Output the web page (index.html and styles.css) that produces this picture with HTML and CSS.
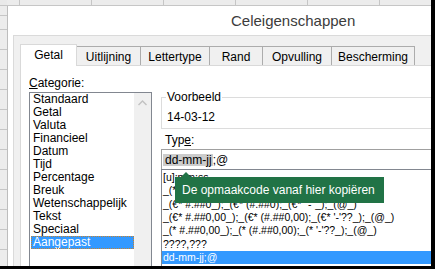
FILE: index.html
```html
<!DOCTYPE html>
<html>
<head>
<meta charset="utf-8">
<link rel="stylesheet" href="styles.css">
</head>
<body>
<div class="screen">
  <div class="corner"></div>
  <div class="col-headers"></div>
  <div class="row-headers"></div>
  <div class="dialog">
    <div class="titlebar">Celeigenschappen</div>
    <div class="body">
      <div class="tabs">
        <div class="tab active">Getal</div>
        <div class="tab">Uitlijning</div>
        <div class="tab">Lettertype</div>
        <div class="tab">Rand</div>
        <div class="tab">Opvulling</div>
        <div class="tab">Bescherming</div>
      </div>
      <div class="panel">
        <div class="left-col">
          <div class="label"><u>C</u>ategorie:</div>
          <div class="listbox">
            <div class="items">
              <div class="item">Standaard</div>
              <div class="item">Getal</div>
              <div class="item">Valuta</div>
              <div class="item">Financieel</div>
              <div class="item">Datum</div>
              <div class="item">Tijd</div>
              <div class="item">Percentage</div>
              <div class="item">Breuk</div>
              <div class="item">Wetenschappelijk</div>
              <div class="item">Tekst</div>
              <div class="item">Speciaal</div>
              <div class="item sel">Aangepast</div>
            </div>
            <div class="scroll">
              <svg class="chev" width="9" height="6" viewBox="0 0 9 6"><path d="M0.5 5 L4.5 1 L8.5 5" fill="none" stroke="#c2c2c2" stroke-width="1.4"/></svg>
            </div>
          </div>
        </div>
        <div class="right-col">
          <fieldset class="preview">
            <legend>Voorbeeld</legend>
            <div class="preview-value">14-03-12</div>
          </fieldset>
          <div class="label type-label">Typ<u>e</u>:</div>
          <div class="input"><span class="selected-text">dd-mm-jj</span>;@</div>
          <div class="format-list">
            <div class="fitem">[u]:mm:ss</div>
            <div class="fitem">_(* #.##0_);_(* (#.##0);_(* "-"_);_(@_)</div>
            <div class="fitem">_(€* #.##0_);_(€* (#.##0);_(€* "-"_);_(@_)</div>
            <div class="fitem">_(€* #.##0,00_);_(€* (#.##0,00);_(€* '-'??_);_(@_)</div>
            <div class="fitem">_(* #.##0,00_);_(* (#.##0,00);_(* '-'??_);_(@_)</div>
            <div class="fitem">????,???</div>
            <div class="fitem sel">dd-mm-jj;@</div>
            <div class="fitem">[$-F800]dddd d MMMM jjjj</div>
          </div>
          <div class="tooltip">De opmaakcode vanaf hier kopiëren</div>
        </div>
      </div>
    </div>
  </div>
</div>
</body>
</html>
```
FILE: styles.css
```css
html, body {
  margin: 0;
  padding: 0;
}
body {
  width: 435px;
  height: 269px;
  overflow: hidden;
  font-family: "Liberation Sans", Arial, sans-serif;
  font-size: 12px;
  color: #000;
}
.screen {
  box-sizing: border-box;
  width: 435px;
  height: 269px;
  border-right: 4px solid #000;
  border-bottom: 3px solid #000;
  overflow: hidden;
  display: grid;
  grid-template-columns: 7px 1fr;
  grid-template-rows: 6px 1fr;
  background: #f3f3f3;
}
.corner {
  background: #e9e9e9;
  border-bottom: 1px solid #c6c6c6;
  box-sizing: border-box;
}
.col-headers {
  background-color: #ececec;
  background-image: repeating-linear-gradient(to right, #c6c6c6 0 1px, transparent 1px 72px);
  background-position: 12px 0;
  border-bottom: 1px solid #c6c6c6;
  box-sizing: border-box;
}
.row-headers {
  background-color: #ececec;
  background-image: repeating-linear-gradient(to bottom, #c6c6c6 0 1px, transparent 1px 20px);
  background-position: 0 23px;
}
.dialog {
  display: flex;
  flex-direction: column;
  background: #fff;
  border-left: 1px solid #bdbdbd;
  min-width: 0;
}
.titlebar {
  height: 29px;
  box-sizing: border-box;
  padding-left: 223px;
  padding-top: 6px;
  font-size: 15px;
  line-height: 18px;
  color: #3c3c3c;
  white-space: nowrap;
}
.body {
  flex: 1;
  margin-left: 5px;
  background: #f0f0f0;
  border-top: 1px solid #dadada;
  border-left: 1px solid #dadada;
  padding: 8px 0 0 6px;
  display: flex;
  flex-direction: column;
  min-height: 0;
}
.tabs {
  display: flex;
  align-items: flex-end;
  height: 21px;
  position: relative;
  z-index: 1;
}
.tab {
  box-sizing: border-box;
  height: 19px;
  border: 1px solid #acacac;
  border-bottom: none;
  background: #f0f0f0;
  margin-left: -1px;
  display: flex;
  align-items: center;
  justify-content: center;
  padding-top: 1px;
  white-space: nowrap;
}
.tab:nth-child(1) { width: 57px; margin-left: 0; }
.tab:nth-child(2) { width: 65px; }
.tab:nth-child(3) { width: 70px; }
.tab:nth-child(4) { width: 54px; }
.tab:nth-child(5) { width: 70px; }
.tab:nth-child(6) { width: 84px; }
.tab.active {
  height: 22px;
  margin-bottom: -1px;
  background: #fff;
  border-color: #d9d9d9;
  padding-top: 0;
  padding-bottom: 1px;
  position: relative;
  z-index: 2;
}
.panel {
  flex: 1;
  background: #fff;
  border: 1px solid #d9d9d9;
  margin-right: -60px;
  display: flex;
  padding: 10px 0 0 8px;
  min-height: 0;
}
.left-col {
  width: 123px;
  display: flex;
  flex-direction: column;
}
.label {
  line-height: 14px;
  height: 14px;
  white-space: nowrap;
}
.left-col .label {
  margin-bottom: 2px;
}
.listbox {
  flex: 1;
  border: 1px solid #828790;
  display: flex;
  background: #fff;
}
.items {
  flex: 1;
}
.item {
  height: 13px;
  line-height: 13px;
  padding-left: 2px;
  margin-left: 1px;
  white-space: nowrap;
}
.item.sel {
  background: #3399ff;
  color: #fff;
  outline: 1px dotted #c7822f;
  outline-offset: -1px;
}
.scroll {
  width: 17px;
  background: #f0f0f0;
  display: flex;
  justify-content: center;
  align-items: flex-start;
  padding-top: 7px;
  box-sizing: border-box;
}
.chev { display: block; }
.right-col {
  flex: 1;
  margin-left: 9px;
  padding-top: 14px;
  position: relative;
  display: flex;
  flex-direction: column;
  min-width: 0;
}
.preview {
  margin: 0;
  padding: 0 0 4px 4px;
  border: 1px solid #dcdcdc;
}
.preview legend {
  padding: 0 1px;
  line-height: 14px;
  font-size: 12px;
}
.preview-value {
  margin-top: 6px;
  line-height: 14px;
  padding-left: 1px;
}
.type-label {
  margin-top: 4px;
  padding-left: 4px;
}
.input {
  margin-top: 2px;
  height: 21px;
  box-sizing: border-box;
  border: 1px solid #a0a0a0;
  display: flex;
  align-items: center;
  padding-left: 1px;
  white-space: nowrap;
}
.selected-text {
  background: #cccccc;
  padding: 0 1px 0 2px;
  line-height: 12px;
  height: 12px;
}
.format-list {
  flex: 1;
  margin-top: -1px;
  border: 1px solid #828790;
  padding-top: 1px;
  font-size: 10.5px;
}
.fitem {
  height: 13.33px;
  line-height: 13.33px;
  padding-left: 1px;
  white-space: nowrap;
}
.fitem.sel {
  background: #3399ff;
  color: #fff;
}
.tooltip {
  position: absolute;
  left: 14px;
  top: 101px;
  width: 209px;
  height: 26px;
  box-sizing: border-box;
  background: #217346;
  color: #fff;
  font-size: 12px;
  line-height: 26px;
  padding-left: 7px;
  white-space: nowrap;
}
.tooltip::before {
  content: "";
  position: absolute;
  left: 6px;
  top: -5px;
  border-left: 5px solid transparent;
  border-right: 5px solid transparent;
  border-bottom: 5px solid #217346;
}
```
